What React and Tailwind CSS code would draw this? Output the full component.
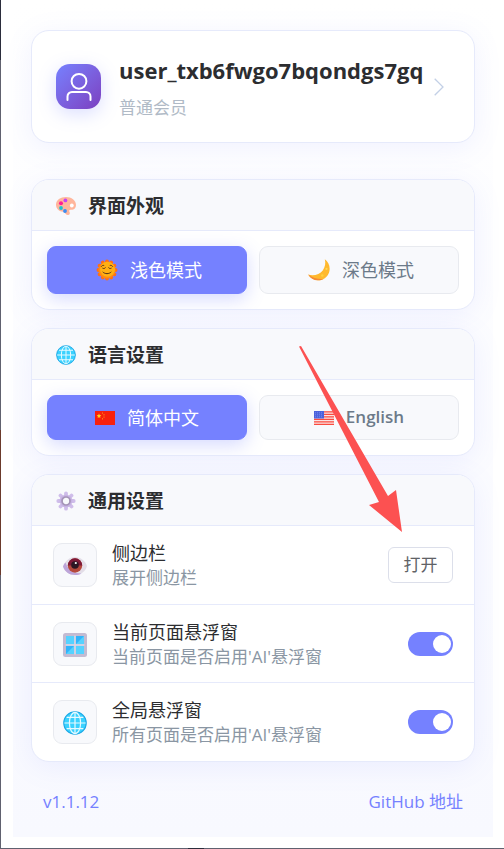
import React, { useState } from "react";

/* ---------- Icons ---------- */

function UserIcon({ className }) {
  return (
    <svg viewBox="0 0 30 30" fill="none" stroke="currentColor" strokeWidth="2" strokeLinecap="round" className={className} aria-hidden="true">
      <circle cx="15" cy="9.300" r="7.400" />
      <path d="M3.500 28v-3.500a4.500 4.500 0 0 1 4.500-4.500h14a4.500 4.500 0 0 1 4.500 4.500V28" />
    </svg>
  );
}

function ChevronIcon({ className }) {
  return (
    <svg viewBox="0 0 10 18" fill="none" stroke="currentColor" strokeWidth="1.300" className={className} aria-hidden="true">
      <path d="M.7.7 9 9 .7 17.300" />
    </svg>
  );
}

function PaletteIcon({ className }) {
  return (
    <svg viewBox="0 0 20 20" className={className} aria-hidden="true">
      <path d="M10 1C4.500 1 0 4 0 8.800c0 3.600 2.600 6 5.600 6.800 2 .5 2.900.9 3.900 2.100 1.100 1.300 2.300 1.700 3.400 1.100 1.200-.7 1-2.100.5-3.100-.6-1.200 0-2 1.200-2h1.700c2.400 0 3.700-2 3.700-4.600C20 4.200 15.500 1 10 1Z" fill="#ffb69c" />
      <circle cx="9.400" cy="4.400" r="1.900" fill="#c544f5" />
      <circle cx="5" cy="7.200" r="2" fill="#ff1f94" />
      <circle cx="5" cy="12" r="1.900" fill="#1ec3cf" />
      <circle cx="9" cy="15" r="1.900" fill="#3c8df2" />
      <circle cx="15.800" cy="9.500" r="1.900" fill="#fff" />
    </svg>
  );
}

function SunIcon({ className }) {
  return (
    <svg viewBox="0 0 22 22" className={className} aria-hidden="true">
      <g fill="#ff6f14">
        {[0, 30, 60, 90, 120, 150, 180, 210, 240, 270, 300, 330].map((a) => (
          <circle key={a} cx="11" cy="2.400" r="1.900" transform={`rotate(${a} 11 11)`} />
        ))}
      </g>
      <circle cx="11" cy="11" r="8.600" fill="#ff8a12" />
      <circle cx="11.500" cy="10.300" r="7.500" fill="#ffb013" />
      <g fill="none" stroke="#54301c" strokeWidth="1" strokeLinecap="round">
        <path d="M5.400 7.400c.6-.9 1.400-1.200 2.400-1M16.600 7.400c-.6-.9-1.400-1.200-2.400-1" />
        <path d="M6.800 9.300c.9.500 1.800.3 2.500-.5M15.200 9.300c-.9.500-1.800.3-2.500-.5" />
        <path d="M7 13.200c1.900 2 6.100 2 8 0" />
      </g>
    </svg>
  );
}

function MoonIcon({ className }) {
  return (
    <svg viewBox="0 0 20 20" className={className} aria-hidden="true">
      <path d="M15.300.3c2.600 2 4.400 5 4.400 8.500A10.600 10.600 0 0 1 9 19.400c-3.600 0-6.900-1.900-8.900-5.300 4.900 1.500 10.600 0 13.300-3.700 2.200-3 2.800-6.600 1.900-10.100Z" fill="#ffb92e" />
      <path d="M.1 14.100c1.900 3.400 5.300 5.300 8.900 5.300 2 0 3.700-.5 5.200-1.300-4.700.4-9.800-.6-14.100-4Z" fill="#f58a35" />
      <circle cx="16.800" cy="9" r="1" fill="#ffd858" />
      <circle cx="13" cy="15" r="1.100" fill="#ffd23c" />
    </svg>
  );
}

function GlobeIcon({ className }) {
  return (
    <svg viewBox="0 0 24 24" className={className} aria-hidden="true">
      <circle cx="12" cy="12" r="11.200" fill="#3ad2ff" stroke="#1fa9e6" strokeWidth="1.200" />
      <g fill="none" stroke="#e8faff" strokeWidth="1.200">
        <ellipse cx="12" cy="12" rx="5.600" ry="10.600" />
        <path d="M12 1.400v21.200M1.400 12h21.200M3.600 6.300h16.800M3.600 17.700h16.800" />
      </g>
    </svg>
  );
}

function ChinaFlag({ className }) {
  return (
    <svg viewBox="0 0 20 14" className={className} aria-hidden="true">
      <rect width="20" height="14" fill="#f8200c" />
      <path d="m4 2.600.7 1.500 1.600.2-1.200 1.100.3 1.700L4 6.300l-1.400.8.3-1.700-1.200-1.100 1.600-.2Z" fill="#ffd21e" />
      <g fill="#ffb21e">
        <circle cx="7.500" cy="2" r=".6" />
        <circle cx="9" cy="3.800" r=".6" />
        <circle cx="9" cy="6" r=".6" />
        <circle cx="7.500" cy="7.800" r=".6" />
      </g>
    </svg>
  );
}

function UsaFlag({ className }) {
  return (
    <svg viewBox="0 0 20 14" className={className} aria-hidden="true">
      <rect width="20" height="14" fill="#fbe3e3" />
      <path d="M0 .8h20M0 3.300h20M0 5.800h20M0 8.300h20M0 10.800h20M0 13.300h20" stroke="#fa4c40" strokeWidth="1.300" />
      <rect width="10" height="7.500" fill="#4b62dc" />
      <path d="M1 1.800h8M1 3.800h8M1 5.800h8" stroke="#8a9cf4" strokeWidth=".7" strokeDasharray="1 1" />
    </svg>
  );
}

function GearIcon({ className }) {
  return (
    <svg viewBox="0 0 20 20" className={className} aria-hidden="true">
      <g stroke="#cfbdea" strokeWidth="3.800" strokeLinecap="round">
        <path d="M10 2.300v15.400M2.300 10h15.400M4.500 4.500l11 11M15.500 4.500l-11 11" />
      </g>
      <circle cx="10" cy="10" r="6.300" fill="#c7b3e3" />
      <circle cx="10" cy="10" r="4" fill="#f8f9fc" stroke="#a594b8" strokeWidth="1.700" />
    </svg>
  );
}

function EyeIcon({ className }) {
  return (
    <svg viewBox="0 0 24 20" className={className} aria-hidden="true">
      <path d="M0 10.500C2 5 6.500 1 12 1s10.500 4 12 9c-1.500 5.500-6 9-12 9S2 16 0 10.500Z" fill="#e3dee8" />
      <path d="M0 10.500C2 16 6 19 12 19c2.500 0 4.700-.5 6.500-1.500C11 17.500 5 14.500 2.500 6.500 1.500 7.500.5 9 0 10.500Z" fill="#bda5d9" />
      <circle cx="12" cy="9.500" r="7.200" fill="#b5483c" />
      <path d="M4.800 9.500a7.200 7.200 0 0 1 14.400 0Z" fill="#7d1837" />
      <circle cx="12" cy="9" r="3.800" fill="#2c1623" />
      <circle cx="12.800" cy="7" r="1.100" fill="#fff" />
    </svg>
  );
}

function WindowIcon({ className }) {
  return (
    <svg viewBox="0 0 24 24" className={className} aria-hidden="true">
      <rect width="24" height="24" rx="2.500" fill="#c3bbd2" />
      <path d="M3 3h8.200v8.200H3zM12.800 3H21v8.200h-8.200zM3 12.800h8.200V21H3zM12.800 12.800H21V21h-8.200z" fill="#56d2ff" />
      <path d="M3 21v-8.200h8.200ZM12.800 11.200V3H21Z" fill="#31b4fb" />
      <path d="M12 2.500v19M2.500 12h19" stroke="#ded7e7" strokeWidth="1.400" />
    </svg>
  );
}

/* ---------- Building blocks ---------- */

function Card({ icon, title, children }) {
  return (
    <section className="mt-[18px] rounded-[18px] border border-[#e6eafb] bg-white shadow-[0_5px_28px_rgba(116,129,255,0.1)] overflow-hidden">
      <h2 className="flex items-center gap-3 h-[51px] pt-0.5 px-6 bg-[#f8f9fc] border-b border-[#e6eafb] text-[19px] font-bold text-[#2c2d30]">
        {icon}
        <span>{title}</span>
      </h2>
      {children}
    </section>
  );
}

function ChoiceButton({ active, onClick, size, children }) {
  return (
    <button
      type="button"
      aria-pressed={active}
      onClick={onClick}
      className={`flex-1 flex items-center justify-center gap-3 rounded-[9px] border text-lg cursor-pointer ${size} ${
        active
          ? "bg-[#7581ff] border-[#7581ff] text-white shadow-[0_5px_18px_rgba(117,129,255,0.3)]"
          : "bg-[#f8f9fc] border-[#e8eaef] text-[#6c7a89]"
      }`}
    >
      {children}
    </button>
  );
}

function SettingRow({ icon, title, desc, children }) {
  return (
    <div className="flex items-center h-[78px] first-of-type:h-[79px] px-[21px] border-b border-[#e6eafb] last:border-b-0">
      <div className="flex items-center justify-center w-11 h-11 pt-0.5 rounded-[9px] border border-[#e8eaef] bg-[#f8f9fc]">
        {icon}
      </div>
      <div className="flex-1 ml-[15px]">
        <div className="text-lg leading-[26px] text-[#2c2d30]">{title}</div>
        <div className="text-[17px] leading-6 text-[#8a96a3]">{desc}</div>
      </div>
      {children}
    </div>
  );
}

function Switch({ label, checked, onChange }) {
  return (
    <label className="relative cursor-pointer">
      <input
        type="checkbox"
        role="switch"
        aria-label={label}
        checked={checked}
        onChange={(e) => onChange(e.target.checked)}
        className="peer sr-only"
      />
      <span className="flex items-center w-[45px] h-6 px-0.5 rounded-full bg-[#cfd4de] peer-checked:bg-[#7581ff] peer-checked:justify-end">
        <span className="w-[18px] h-[18px] rounded-full bg-white" />
      </span>
    </label>
  );
}

export default function App() {
  const [theme, setTheme] = useState("light");
  const [lang, setLang] = useState("zh");
  const [pageFloat, setPageFloat] = useState(true);
  const [globalFloat, setGlobalFloat] = useState(true);

  return (
    <div className="relative flex flex-col min-h-screen bg-white font-['Open_Sans','Noto_Sans_CJK_SC',sans-serif]">
      <div className="flex flex-1">
        {/* Window edge */}
        <div className="flex flex-col w-px">
          <div className="h-[60px] bg-[#2b2d3c]" />
          <div className="h-[370px] bg-[#60616f]" />
          <div className="h-[145px] bg-[#6b3a2c]" />
          <div className="flex-1 bg-[#60616f]" />
        </div>

        <main className="flex-1 ml-3 mr-[11px] mb-[11px] px-[18px] pt-[30px] bg-linear-to-b from-white to-[#f8f9ff]">
          {/* Profile */}
          <button
            type="button"
            className="flex items-center w-full h-[113px] mb-9 px-6 rounded-[18px] border border-[#e6eafb] bg-white text-left shadow-[0_5px_28px_rgba(116,129,255,0.1)] cursor-pointer"
          >
            <span className="flex items-center justify-center w-[45px] h-[45px] rounded-[14px] bg-linear-to-br from-[#7581ff] to-[#7b3fc0] text-white shadow-[0_5px_18px_rgba(117,129,255,0.25)]">
              <UserIcon className="w-[30px] h-[30px]" />
            </span>
            <span className="flex-1 ml-[18px]">
              <span className="block text-[22px] leading-8 font-bold text-[#2c2d30]">user_txb6fwgo7bqondgs7gq</span>
              <span className="block mt-2.5 text-[17px] leading-6 text-[#b0bac6]">普通会员</span>
            </span>
            <ChevronIcon className="w-2.5 h-[18px] mr-1.5 text-[#c3d0e6]" />
          </button>

          <Card icon={<PaletteIcon className="w-5 h-5" />} title="界面外观">
            <div className="flex gap-3 p-[15px]">
              <ChoiceButton size="h-12 pl-1" active={theme === "light"} onClick={() => setTheme("light")}>
                <SunIcon className="w-[22px] h-[22px]" />
                <span>浅色模式</span>
              </ChoiceButton>
              <ChoiceButton size="h-12 pl-1" active={theme === "dark"} onClick={() => setTheme("dark")}>
                <MoonIcon className="w-[22px] h-[22px]" />
                <span>深色模式</span>
              </ChoiceButton>
            </div>
          </Card>

          <Card icon={<GlobeIcon className="w-5 h-5" />} title="语言设置">
            <div className="flex gap-3 p-[15px]">
              <ChoiceButton size="h-[45px]" active={lang === "zh"} onClick={() => setLang("zh")}>
                <ChinaFlag className="w-5 h-3.5" />
                <span>简体中文</span>
              </ChoiceButton>
              <ChoiceButton size="h-[45px]" active={lang === "en"} onClick={() => setLang("en")}>
                <UsaFlag className="w-5 h-3.5" />
                <span className="text-[17px] font-semibold">English</span>
              </ChoiceButton>
            </div>
          </Card>

          <Card icon={<GearIcon className="w-5 h-5" />} title="通用设置">
            <SettingRow icon={<EyeIcon className="w-6 h-5" />} title="侧边栏" desc="展开侧边栏">
              <button type="button" className="w-[65px] h-9 rounded-md border border-[#dcdfea] bg-white text-[17px] text-[#606266] cursor-pointer">
                打开
              </button>
            </SettingRow>
            <SettingRow icon={<WindowIcon className="w-6 h-6" />} title="当前页面悬浮窗" desc="当前页面是否启用'AI'悬浮窗">
              <Switch label="当前页面悬浮窗" checked={pageFloat} onChange={setPageFloat} />
            </SettingRow>
            <SettingRow icon={<GlobeIcon className="w-6 h-6" />} title="全局悬浮窗" desc="所有页面是否启用'AI'悬浮窗">
              <Switch label="全局悬浮窗" checked={globalFloat} onChange={setGlobalFloat} />
            </SettingRow>
          </Card>

          <footer className="flex justify-between px-3 pt-[26px] text-[17px] leading-7 text-[#7581ff]">
            <span>v1.1.12</span>
            <a href="#github">GitHub 地址</a>
          </footer>
        </main>
      </div>

      <div className="flex h-px bg-[#60616f]">
        <div className="w-4 ml-[188px] bg-[#2b2d3c]" />
      </div>

      {/* Pointer to the sidebar button */}
      <svg viewBox="0 0 104 187" className="absolute left-[299px] top-[346px] w-[104px] h-[187px] pointer-events-none" aria-hidden="true">
        <path d="M0 .5 2 0 89 150l8-6 6 42-33-27 10-3Z" fill="#fc5151" strokeLinejoin="round" />
      </svg>
    </div>
  );
}
